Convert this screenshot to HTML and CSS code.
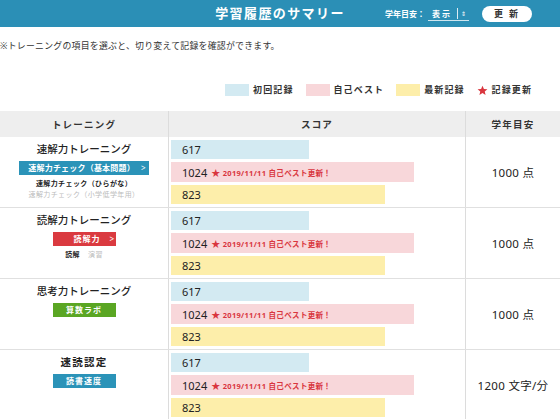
FILE: index.html
```html
<!DOCTYPE html>
<html lang="ja">
<head>
<meta charset="utf-8">
<link rel="stylesheet" href="styles.css">
</head>
<body>
<header class="topbar">
  <div></div>
  <h1 class="title">学習履歴のサマリー</h1>
  <div class="controls">
    <span class="ctl-label">学年目安：</span>
    <span class="select"><span class="sel-val">表示</span><span class="sel-sep"></span><span class="sel-arrow">⇕</span></span>
    <button class="update">更 新</button>
  </div>
</header>

<p class="note">※トレーニングの項目を選ぶと、切り変えて記録を確認ができます。</p>

<div class="legend">
  <span class="lg"><span class="sw sw-blue"></span>初回記録</span>
  <span class="lg"><span class="sw sw-pink"></span>自己ベスト</span>
  <span class="lg"><span class="sw sw-yellow"></span>最新記録</span>
  <span class="lg"><svg class="star" viewBox="0 0 24 24"><path d="M12 1.5l3.1 7.1 7.6.6-5.8 5 1.8 7.5L12 17.7l-6.7 4 1.8-7.5-5.8-5 7.6-.6z"/></svg>記録更新</span>
</div>

<div class="table">
  <div class="row head">
    <div class="cell c1">トレーニング</div>
    <div class="cell c2">スコア</div>
    <div class="cell c3">学年目安</div>
  </div>

  <div class="row">
    <div class="cell c1 left">
      <div class="name">速解力トレーニング</div>
      <div class="btn btn-blue wide">速解力チェック（基本問題）<span class="chev">&gt;</span></div>
      <div class="sub dark">速解力チェック（ひらがな）</div>
      <div class="sub light">速解力チェック（小学低学年用）</div>
    </div>
    <div class="cell c2 bars">
      <div class="bar b-blue" style="width:138px">617</div>
      <div class="bar b-pink" style="width:243px">1024<span class="best"><span class="rstar">★</span> 2019/11/11 自己ベスト更新！</span></div>
      <div class="bar b-yellow" style="width:214px">823</div>
    </div>
    <div class="cell c3 val">1000 点</div>
  </div>

  <div class="row">
    <div class="cell c1 left">
      <div class="name">読解力トレーニング</div>
      <div class="btn btn-red">読解力<span class="chev">&gt;</span></div>
      <div class="sub dark">読解<span class="light gap">演習</span></div>
    </div>
    <div class="cell c2 bars">
      <div class="bar b-blue" style="width:138px">617</div>
      <div class="bar b-pink" style="width:243px">1024<span class="best"><span class="rstar">★</span> 2019/11/11 自己ベスト更新！</span></div>
      <div class="bar b-yellow" style="width:214px">823</div>
    </div>
    <div class="cell c3 val">1000 点</div>
  </div>

  <div class="row">
    <div class="cell c1 left">
      <div class="name">思考力トレーニング</div>
      <div class="btn btn-green">算数ラボ</div>
    </div>
    <div class="cell c2 bars">
      <div class="bar b-blue" style="width:138px">617</div>
      <div class="bar b-pink" style="width:243px">1024<span class="best"><span class="rstar">★</span> 2019/11/11 自己ベスト更新！</span></div>
      <div class="bar b-yellow" style="width:214px">823</div>
    </div>
    <div class="cell c3 val">1000 点</div>
  </div>

  <div class="row">
    <div class="cell c1 left">
      <div class="name bold">速読認定</div>
      <div class="btn btn-blue">読書速度</div>
    </div>
    <div class="cell c2 bars">
      <div class="bar b-blue" style="width:138px">617</div>
      <div class="bar b-pink" style="width:243px">1024<span class="best"><span class="rstar">★</span> 2019/11/11 自己ベスト更新！</span></div>
      <div class="bar b-yellow" style="width:214px">823</div>
    </div>
    <div class="cell c3 val">1200 文字/分</div>
  </div>
</div>
</body>
</html>
```

FILE: styles.css
```css
* { box-sizing: border-box; margin: 0; padding: 0; }
html, body { background: #fff; }
body {
  width: 560px;
  height: 419px;
  overflow: hidden;
  font-family: "Noto Sans", "Noto Sans CJK JP", sans-serif;
  color: #333;
}

.topbar {
  height: 27px;
  background: #2b8fb6;
  display: grid;
  grid-template-columns: 1fr auto 1fr;
  align-items: center;
  color: #fff;
}
.title {
  font-size: 13px;
  font-weight: 700;
  letter-spacing: 1.4px;
  line-height: 27px;
}
.controls {
  display: flex;
  align-items: center;
  justify-content: flex-end;
  padding-right: 28px;
  font-size: 8px;
  font-weight: 700;
}
.ctl-label { letter-spacing: 0; }
.select {
  display: flex;
  align-items: center;
  margin-left: 3px;
  width: 41px;
  height: 13px;
  padding-left: 4px;
  border-bottom: 1px solid #cfe6ef;
  margin-top: 1px;
}
.sel-val { letter-spacing: 2px; }
.sel-sep {
  width: 1px;
  height: 11px;
  background: #dcecf3;
  margin-left: 5px;
}
.sel-arrow {
  font-size: 6px;
  margin-left: 3px;
  font-weight: 400;
}
.update {
  margin-left: 13px;
  width: 50px;
  height: 16px;
  border: none;
  border-radius: 8px;
  background: #fff;
  color: #333;
  font-family: "Noto Sans CJK JP", sans-serif;
  font-size: 9px;
  font-weight: 700;
  letter-spacing: 2px;
}

.note {
  margin-top: 14px;
  font-size: 8.9px;
  line-height: 10px;
  letter-spacing: 0.25px;
  color: #333;
  white-space: nowrap;
}

.legend {
  margin-top: 33px;
  height: 12px;
  display: flex;
  justify-content: flex-end;
  padding-right: 28px;
  gap: 12px;
  font-size: 9px;
  font-weight: 700;
  letter-spacing: 1.1px;
  line-height: 12px;
}
.lg { display: flex; align-items: center; }
.sw { width: 24px; height: 12px; margin-right: 4px; }
.sw-blue { background: #d3eaf2; }
.sw-pink { background: #f8d7da; }
.sw-yellow { background: #fdeeaa; }
.star { width: 11px; height: 11px; fill: #d9363e; margin-right: 4px; }

.table { margin-top: 15px; }
.row {
  display: grid;
  grid-template-columns: 169px 297px 94px;
  border-bottom: 1px solid #e0e0e0;
}
.cell { border-right: 1px solid #dcdcdc; }
.cell.c3 { border-right: none; }

.row.head {
  height: 26px;
  background: #eeeeee;
  border-bottom: none;
}
.head .cell {
  display: flex;
  align-items: center;
  justify-content: center;
  font-size: 9.5px;
  font-weight: 700;
  letter-spacing: 1.2px;
}

.left {
  display: flex;
  flex-direction: column;
  align-items: center;
  padding-top: 5px;
}
.name {
  font-size: 10.5px;
  font-weight: 500;
  line-height: 14px;
  letter-spacing: 0;
  color: #222;
}
.name.bold { font-weight: 700; letter-spacing: 1.3px; }
.btn {
  margin-top: 5px;
  height: 14px;
  width: 63px;
  color: #fff;
  font-size: 8px;
  font-weight: 700;
  line-height: 14px;
  text-align: center;
  letter-spacing: 1px;
}
.btn.wide { width: 130px; letter-spacing: 0.2px; padding-left: 6px; }
.chev { margin-left: 6px; font-weight: 400; font-family: "Noto Sans", sans-serif; }
.btn-blue { background: #2b93b8; }
.btn-red { background: #da3a40; text-align: left; padding-left: 21px; }
.btn-red .chev { margin-left: 9px; }
.btn-green { background: #5aa623; }
.sub {
  font-size: 7px;
  line-height: 11px;
  font-weight: 700;
  letter-spacing: 0.4px;
}
.sub.dark { color: #222; margin-top: 3px; }
.light { color: #bcbcbc; font-weight: 400; }
.gap { margin-left: 8px; }

.bars {
  display: flex;
  flex-direction: column;
  gap: 3px;
  padding: 3px 0 3px 2px;
}
.bar {
  height: 19px;
  display: flex;
  align-items: center;
  padding-left: 11px;
  font-size: 11px;
  color: #222;
  white-space: nowrap;
}
.b-blue { background: #d3eaf2; }
.b-pink { background: #f8d7da; height: 20px; }
.b-yellow { background: #fdeeaa; }
.best {
  margin-left: 4px;
  color: #d9363e;
  font-size: 7.5px;
  font-weight: 700;
  letter-spacing: 0.3px;
}
.rstar { font-size: 9px; }

.val {
  display: flex;
  align-items: center;
  justify-content: center;
  font-size: 11.5px;
  color: #222;
  letter-spacing: 0.3px;
}
```
